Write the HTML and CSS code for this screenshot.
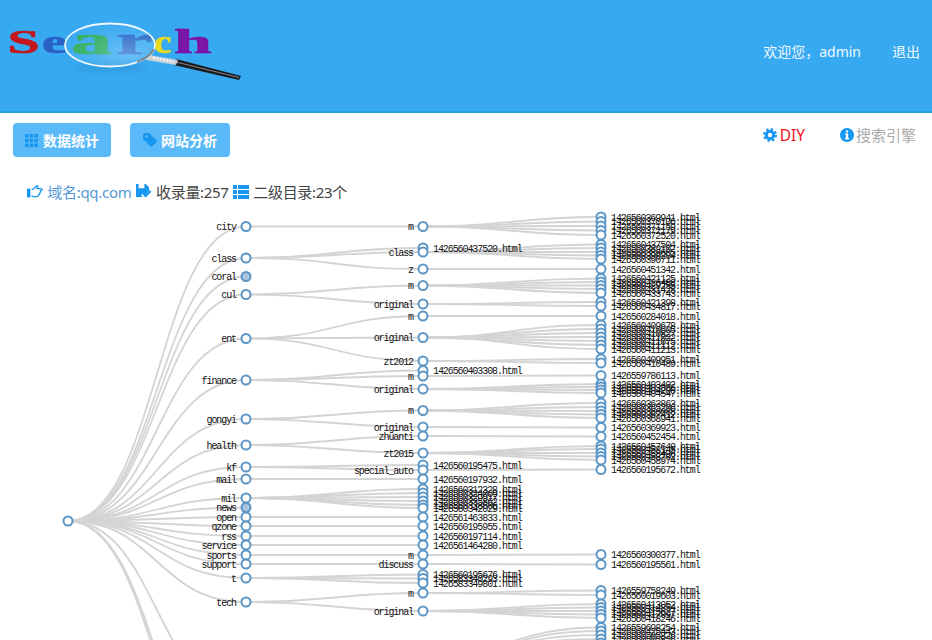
FILE: index.html
```html
<!DOCTYPE html>
<html lang="zh-CN">
<head>
<meta charset="utf-8">
<title>Search</title>
<link rel="stylesheet" href="styles.css">
</head>
<body>
<div class="page">
  <header class="topbar">
    <svg class="logo" width="250" height="90" viewBox="0 0 250 90" role="img" aria-label="Search">
      <defs>
        <radialGradient id="lens" cx="0.7" cy="0.7" r="0.75">
          <stop offset="0" stop-color="#b5e2fb" stop-opacity="0.42"/>
          <stop offset="1" stop-color="#7cc6f5" stop-opacity="0.06"/>
        </radialGradient>
        <filter id="soft" x="-10%" y="-10%" width="120%" height="120%"><feGaussianBlur stdDeviation="0.4"/></filter>
        <filter id="shade" x="-20%" y="-50%" width="140%" height="200%"><feGaussianBlur stdDeviation="3"/></filter>
      </defs>
      <ellipse class="lens-shadow" cx="110" cy="67" rx="36" ry="4" filter="url(#shade)"/>
      <g class="logo-word" filter="url(#soft)">
        <text class="l-red" transform="translate(7.500 53) scale(1.7 1)">S</text>
        <text class="l-blue" transform="translate(42 53) scale(1.65 1)">e</text>
        <text class="l-yellow" transform="translate(154 53) scale(1.15 1)">c</text>
        <text class="l-purple" transform="translate(174 53) scale(2 1)">h</text>
        <text class="l-green l-big" transform="translate(71 54) scale(2 1)">a</text>
        <text class="l-blue l-big" transform="translate(116 54) scale(2 1)">r</text>
      </g>
      <g filter="url(#soft)">
        <path class="h-black" d="M176 59 L241 76 L239 80 L174 65 Z"/>
        <path class="h-line" d="M176 62 L239 77.500"/>
        <path class="h-metal" d="M149 55 L178 60 L176 65 L146 60 Z"/>
        <path class="h-dash" d="M153 57.500 L174 62"/>
        <ellipse class="lens" cx="110" cy="45" rx="45" ry="21.500"/>
        <path class="lens-rim" d="M137 62 Q150 57 154 49"/>
      </g>
    </svg>
    <nav class="user">
      <span>欢迎您，admin</span>
      <a href="#">退出</a>
    </nav>
  </header>

  <div class="toolbar">
    <div class="actions">
      <a class="btn" href="#">
        <svg class="ico" width="13" height="13" viewBox="0 0 13 13"><path d="M0 0h3.600v3.600H0zM4.700 0h3.600v3.600H4.700zM9.400 0H13v3.600H9.400zM0 4.700h3.600v3.600H0zM4.700 4.700h3.600v3.600H4.700zM9.400 4.700H13v3.600H9.400zM0 9.400h3.600V13H0zM4.700 9.400h3.600V13H4.700zM9.400 9.400H13V13H9.400z"/></svg>
        数据统计
      </a>
      <a class="btn btn-tag" href="#">
        <svg class="ico" width="14" height="14" viewBox="0 0 14 14"><path fill-rule="evenodd" d="M0 1.500A1.500 1.500 0 0 1 1.500 0H6l7.600 7.600a1 1 0 0 1 0 1.400l-4.600 4.600a1 1 0 0 1-1.400 0L0 6zM3.400 2.100a1.300 1.300 0 1 0 .01 0z"/></svg>
        网站分析
      </a>
    </div>
    <div class="links">
      <a class="link-diy" href="#">
        <svg class="ico" width="14" height="14" viewBox="0 0 14 14"><circle class="gear-ring" cx="7" cy="7" r="3.700"/><circle class="gear-teeth" cx="7" cy="7" r="5.900"/></svg>DIY
      </a>
      <a class="link-engine" href="#">
        <svg class="ico" width="14" height="14" viewBox="0 0 14 14"><path fill-rule="evenodd" d="M7 0a7 7 0 1 0 .01 0zM5.900 2.400h2.200v2H5.900zM5.200 5.400h2.900v4.400h.9v1.600H5.100V9.800h.9V7H5.200z"/></svg>搜索引擎
      </a>
    </div>
  </div>

  <div class="stats">
    <svg class="ico" width="16" height="13" viewBox="0 0 16 13"><path d="M0 3.600h3.400v8.800H0z"/><path class="hand" d="M4.600 4.200h1.800L9.400 1c1-.8 1.900.3 1.200 1.400L10 3.600h4c1.400 0 1.400 2 0 2h-.6c.5 1.400-.1 2-.7 2.200.2 1.100-.3 1.800-1 2 0 1.200-.7 1.800-1.700 1.800H7c-1 0-1.600-.6-2.400-.6"/></svg>
    <span class="stat-domain">域名:qq.com</span>
    <svg class="ico" width="16" height="15" viewBox="0 0 16 15"><path d="M0 0h2.600v4.200h5.800V0h1.400L13 3.200v3.400L8.600 11 7 9.400 5.200 11.200 6.800 13H0z"/><path class="check" d="M7.600 9.800l2 2 4.900-5"/></svg>
    <span>收录量:257</span>
    <svg class="ico" width="16" height="14" viewBox="0 0 16 14"><path d="M0 0h4v4H0zM5 0h11v4H5zM0 5h4v4H0zM5 5h11v4H5zM0 10h4v4H0zM5 10h11v4H5z"/></svg>
    <span>二级目录:23个</span>
  </div>

  <svg id="tree" class="tree" width="932" height="435" viewBox="0 205 932 435">
    <g id="links"></g>
    <g id="nodes"></g>
  </svg>
</div>
<script src="script.js"></script>
</body>
</html>
```

FILE: styles.css
```css
* { box-sizing: border-box; }
html, body { margin: 0; padding: 0; background: #fff; }
body { font-family: "Noto Sans", "Noto Sans CJK SC", sans-serif; font-size: 14px; color: #444; }
a { text-decoration: none; color: inherit; }

.page { width: 932px; height: 640px; overflow: hidden; }

.topbar {
  height: 113px;
  background: #37a9f1;
  border-bottom: 2px solid #1ea4d8;
  display: flex;
  justify-content: space-between;
  align-items: flex-start;
}
.logo { display: block; }
.logo-word text { font-family: "Liberation Serif", serif; font-weight: 700; font-size: 34px; stroke-width: 0.7; }
.logo-word .l-big { font-size: 41px; }
.l-red { fill: #c4161c; stroke: #c4161c; }
.l-blue { fill: #2a5fc4; stroke: #2a5fc4; }
.l-green { fill: #2fae4f; stroke: #2fae4f; }
.l-yellow { fill: #e8dc1c; stroke: #e8dc1c; }
.l-purple { fill: #7a12a8; stroke: #7a12a8; }
.lens { fill: url(#lens); stroke: #eef7fc; stroke-width: 1.8; }
.lens-rim { fill: none; stroke: #77828a; stroke-width: 1.8; }
.lens-shadow { fill: #2588cc; opacity: 0.45; }
.h-black { fill: #1a1a1f; }
.h-line { fill: none; stroke: #8d9499; stroke-width: 0.9; }
.h-metal { fill: #c9d2d6; }
.h-dash { fill: none; stroke: #f4f6f7; stroke-width: 2; stroke-dasharray: 2 1.400; }

.user {
  display: flex;
  gap: 31px;
  padding: 42px 12px 0 0;
  color: #f0f8fe;
  font-size: 14px;
  line-height: 20px;
}

.toolbar {
  display: flex;
  justify-content: space-between;
  align-items: flex-start;
  padding: 10px 16px 0 13px;
}
.actions { display: flex; gap: 19px; }
.btn {
  height: 34px;
  padding: 0 12px;
  display: flex;
  align-items: center;
  gap: 5px;
  background: #5ab9f8;
  border-radius: 4px;
  color: #fff;
  font-weight: 700;
  font-size: 14px;
}
.btn-tag { padding: 0 13px; gap: 4px; }
.ico { display: block; flex: none; fill: #1797f1; }
.links { display: flex; gap: 35px; padding-top: 2px; font-size: 15px; line-height: 20px; }
.link-diy, .link-engine { display: flex; align-items: center; gap: 2px; }
.link-diy { color: #f5141e; gap: 3px; font-size: 15.5px; }
.link-engine { color: #aaa; }
.gear-ring { fill: none; stroke: #1797f1; stroke-width: 3; }
.gear-teeth { fill: none; stroke: #1797f1; stroke-width: 2.2; stroke-dasharray: 2.4 2.234; }

.stats {
  display: flex;
  align-items: center;
  gap: 4.3px;
  padding: 21px 0 0 27px;
  height: 48px;
  font-size: 15px;
  letter-spacing: -0.3px;
  color: #444;
}
.stat-domain { color: #5498d6; }
.hand { fill: none; stroke: #1797f1; stroke-width: 1.3; }
.check { fill: none; stroke: #1797f1; stroke-width: 2.4; }

.tree { display: block; }
.link { fill: none; stroke: #d4d4d4; stroke-width: 1.8; }
.node { fill: #fff; stroke: #5b96c6; stroke-width: 2; }
.node-closed { fill: #b0c4de; }
.label { font-family: "Liberation Mono", monospace; font-size: 10px; letter-spacing: -1.08px; fill: #111; }
```

FILE: script.js
```js
// Domain tree: [name, y, collapsed, children]; each child is [name, y, children].
function leaves(prefix, ys) {
  return ys.map(function (y, i) { return [String(prefix[i] || prefix[prefix.length - 1]), y, []]; });
}

var tree = [
  ["city", 226.5, false, [["m", 226.5, leaves([1426560369941, 1426560370106, 1426560371159, 1426560372179, 1426560372520], [217, 221.5, 226, 230.5, 235])]]],
  ["class", 258, false, [
    ["1426560437520.html", 248, []],
    ["class", 252, leaves([1426560437504, 1426560389102, 1426560389665, 1426560390204, 1426560390711], [244.5, 248, 252, 255.5, 259])],
    ["z", 269, leaves([1426560451342], [269])]
  ]],
  ["coral", 276.5, true, []],
  ["cul", 294.5, false, [
    ["m", 285.5, leaves([1426560421125, 1426560426488, 1426560429255, 1426560431428, 1426560433743], [278.5, 282, 285.5, 289, 293])],
    ["original", 304, leaves([1426560421398, 1426560434817], [302, 306])]
  ]],
  ["ent", 338.5, false, [
    ["m", 316, leaves([1426560284018], [316])],
    ["original", 337.5, leaves([1426560409678, 1426560410605, 1426560410827, 1426560411022, 1426560411075, 1426560411112, 1426560411213], [325, 329, 333, 337, 341, 345, 349])],
    ["zt2012", 361, leaves([1426560409951, 1426560410489], [359, 363])]
  ]],
  ["finance", 380, false, [
    ["1426560403308.html", 370.5, []],
    ["m", 376, leaves([1426559786113], [375.5])],
    ["original", 389, leaves([1426560403492, 1426560403866, 1426560404206, 1426560404547], [384, 387, 390, 393])]
  ]],
  ["gongyi", 419, false, [
    ["m", 410.5, leaves([1426560363863, 1426560365206, 1426560366088, 1426560367412, 1426560368941], [403, 407, 411, 414.5, 418])],
    ["original", 427, leaves([1426560369923], [427.5])]
  ]],
  ["health", 445, false, [
    ["zhuanti", 436, leaves([1426560452454], [436.5])],
    ["zt2015", 453, leaves([1426560457649, 1426560458145, 1426560458496, 1426560458702, 1426560458974], [446, 449, 453, 456.5, 460])]
  ]],
  ["kf", 467, false, [
    ["1426560195475.html", 465, []],
    ["special_auto", 470, leaves([1426560195672], [469.5])]
  ]],
  ["mail", 479, false, [["1426560197932.html", 479, []]]],
  ["mil", 498, false, [
    ["1426560312328.html", 489, []],
    ["1426560324069.html", 493, []],
    ["1426560329917.html", 497, []],
    ["1426560335862.html", 501, []],
    ["1426560338606.html", 505, []],
    ["1426560342029.html", 508, []]
  ]],
  ["news", 507.5, true, []],
  ["open", 517, false, [["1426561463833.html", 517, []]]],
  ["qzone", 526, false, [["1426560195955.html", 526, []]]],
  ["rss", 536, false, [["1426560197114.html", 536, []]]],
  ["service", 545, false, [["1426561464280.html", 545, []]]],
  ["sports", 555, false, [["m", 555, leaves([1426560300377], [554.5])]]],
  ["support", 564, false, [["discuss", 564, leaves([1426560195561], [564.5])]]],
  ["t", 578, false, [
    ["1426560195676.html", 574.5, []],
    ["1426583340293.html", 578.5, []],
    ["1426583349801.html", 583, []]
  ]],
  ["tech", 602, false, [
    ["m", 593, leaves([1426559758249, 1426560019603], [590.5, 595])],
    ["original", 611, leaves([1426560413052, 1426560414854, 1426560415627, 1426560417097, 1426560418246], [604, 607.5, 611, 614.5, 618])]
  ]],
  ["", 699, false, [
    ["", 655, leaves([1426559698254, 1426560425443, 1426560505826, 1426560505826, 1426560505826], [627.5, 631, 635, 639, 643])]
  ]],
  ["", 787, false, []],
  ["", 801, false, []]
];

var NS = "http://www.w3.org/2000/svg";
var X = [68, 246, 423, 601];
var linkLayer = document.getElementById("links");
var nodeLayer = document.getElementById("nodes");

function el(tag, cls, attrs, parent) {
  var e = document.createElementNS(NS, tag);
  e.setAttribute("class", cls);
  for (var k in attrs) e.setAttribute(k, attrs[k]);
  parent.appendChild(e);
  return e;
}

function link(x0, y0, x1, y1) {
  var m = (x0 + x1) / 2;
  el("path", "link", { d: "M" + x0 + "," + y0 + "C" + m + "," + y0 + " " + m + "," + y1 + " " + x1 + "," + y1 }, linkLayer);
}

function node(x, y, name, branch, closed) {
  el("circle", closed ? "node node-closed" : "node", { cx: x, cy: y, r: 4.5 }, nodeLayer);
  if (!name || y > 640) return;
  var text = el("text", "label", {
    x: branch ? x - 10 : x + 10,
    y: y + 3.5,
    "text-anchor": branch ? "end" : "start"
  }, nodeLayer);
  text.textContent = name;
}

function leafName(name) {
  return /^\d+$/.test(name) ? name + ".html" : name;
}

node(X[0], 521, "", true, false);
tree.forEach(function (a) {
  link(X[0], 521, X[1], a[1]);
  node(X[1], a[1], a[0], true, a[2]);
  a[3].forEach(function (b) {
    link(X[1], a[1], X[2], b[1]);
    node(X[2], b[1], leafName(b[0]), b[2].length > 0, false);
    b[2].forEach(function (c) {
      link(X[2], b[1], X[3], c[1]);
      node(X[3], c[1], leafName(c[0]), false, false);
    });
  });
});
```
